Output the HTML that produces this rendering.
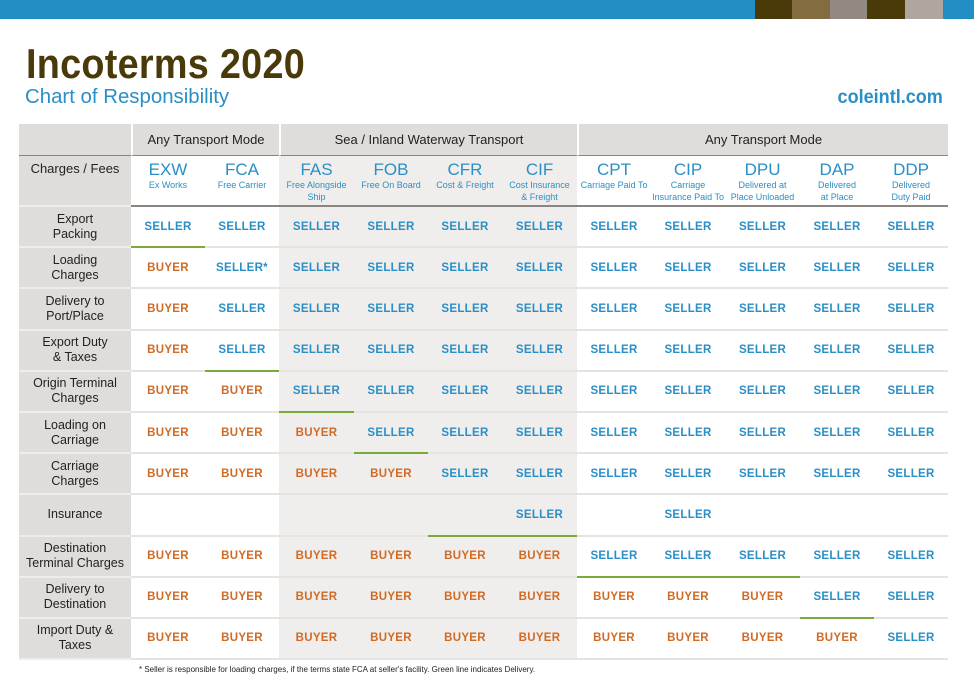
<!DOCTYPE html>
<html><head><meta charset="utf-8"><style>
*{margin:0;padding:0;box-sizing:border-box}
body{width:974px;height:676px;background:#fff;position:relative;overflow:hidden;font-family:"Liberation Sans",sans-serif}
.bar{position:absolute;left:0;top:0;width:974px;height:19px;background:#228dc2}
.sq{position:absolute;top:0;height:19px}
h1{position:absolute;left:26px;top:40px;font-size:42px;color:#4a3a0a;font-weight:bold;transform:scaleX(0.9);transform-origin:left;white-space:nowrap;letter-spacing:0.3px}
.sub{position:absolute;left:25px;top:86px;font-size:20px;color:#2a8fc7;transform:scaleX(1.02);transform-origin:left;white-space:nowrap}
.url{position:absolute;right:31px;top:87px;font-size:19px;color:#2a8fc7;font-weight:bold;transform:scaleX(0.95);transform-origin:right}
table{position:absolute;left:19px;top:124px;border-collapse:separate;border-spacing:0;table-layout:fixed;width:929px}
td{text-align:center;vertical-align:middle;padding:0;border-bottom:2px solid #e6e3e0;overflow:hidden}
tr.g td{background:#e0dcd9;height:32px;font-size:13px;color:#222;border-bottom:1px solid #8a8580}
tr.g td+td{border-left:2px solid #fff}
tr.c td{height:51px;vertical-align:top;padding-top:5px;border-bottom:2px solid #8a8580}
.code{font-size:17px;color:#2a8fc7;line-height:18px}
.n{font-size:9px;color:#2a8fc7;line-height:12px}
.s{background:#f0eeec}
tr.d td{height:41.2px;font-size:11.5px;font-weight:bold;letter-spacing:0.3px}
tr td.l,tr.d td.l{background:#e0dcd9;font-size:12.5px;color:#222;line-height:15px;border-bottom:2px solid #efedeb;font-weight:normal;letter-spacing:0}
tr.c td.l{vertical-align:top;padding-top:5px;font-size:13px}
.S{color:#2a8fc7}.B{color:#d06a24}
tr.d td.gr{border-bottom:2px solid #7aab3a}
.foot{position:absolute;left:139px;top:665px;font-size:8px;color:#222}
</style></head><body>
<div class="bar"></div>
<div class="sq" style="left:755px;width:37px;background:#4a3a0a"></div>
<div class="sq" style="left:792px;width:38px;background:#836d40"></div>
<div class="sq" style="left:830px;width:37px;background:#928a82"></div>
<div class="sq" style="left:867px;width:38px;background:#4a3a0a"></div>
<div class="sq" style="left:905px;width:38px;background:#b0a6a0"></div>
<h1>Incoterms 2020</h1>
<div class="sub">Chart of Responsibility</div>
<div class="url">coleintl.com</div>
<table>
<colgroup><col style="width:112px"><col style="width:74px"><col style="width:74px"><col style="width:75px"><col style="width:74px"><col style="width:74px"><col style="width:75px"><col style="width:74px"><col style="width:74px"><col style="width:75px"><col style="width:74px"><col style="width:74px"></colgroup>
<tr class="g"><td></td><td colspan="2">Any Transport Mode</td><td colspan="4">Sea / Inland Waterway Transport</td><td colspan="5">Any Transport Mode</td></tr>
<tr class="c"><td class="l">Charges / Fees</td>
<td><div class="code">EXW</div><div class="n">Ex Works</div></td>
<td><div class="code">FCA</div><div class="n">Free Carrier</div></td>
<td class="s"><div class="code">FAS</div><div class="n">Free Alongside<br>Ship</div></td>
<td class="s"><div class="code">FOB</div><div class="n">Free On Board</div></td>
<td class="s"><div class="code">CFR</div><div class="n">Cost &amp; Freight</div></td>
<td class="s"><div class="code">CIF</div><div class="n">Cost Insurance<br>&amp; Freight</div></td>
<td><div class="code">CPT</div><div class="n">Carriage Paid To</div></td>
<td><div class="code">CIP</div><div class="n">Carriage<br>Insurance Paid To</div></td>
<td><div class="code">DPU</div><div class="n">Delivered at<br>Place Unloaded</div></td>
<td><div class="code">DAP</div><div class="n">Delivered<br>at Place</div></td>
<td><div class="code">DDP</div><div class="n">Delivered<br>Duty Paid</div></td></tr>
<tr class="d"><td class="l">Export<br>Packing</td><td class="S gr">SELLER</td><td class="S">SELLER</td><td class="S s">SELLER</td><td class="S s">SELLER</td><td class="S s">SELLER</td><td class="S s">SELLER</td><td class="S">SELLER</td><td class="S">SELLER</td><td class="S">SELLER</td><td class="S">SELLER</td><td class="S">SELLER</td></tr>
<tr class="d"><td class="l">Loading<br>Charges</td><td class="B">BUYER</td><td class="S">SELLER*</td><td class="S s">SELLER</td><td class="S s">SELLER</td><td class="S s">SELLER</td><td class="S s">SELLER</td><td class="S">SELLER</td><td class="S">SELLER</td><td class="S">SELLER</td><td class="S">SELLER</td><td class="S">SELLER</td></tr>
<tr class="d"><td class="l">Delivery to<br>Port/Place</td><td class="B">BUYER</td><td class="S">SELLER</td><td class="S s">SELLER</td><td class="S s">SELLER</td><td class="S s">SELLER</td><td class="S s">SELLER</td><td class="S">SELLER</td><td class="S">SELLER</td><td class="S">SELLER</td><td class="S">SELLER</td><td class="S">SELLER</td></tr>
<tr class="d"><td class="l">Export Duty<br>&amp; Taxes</td><td class="B">BUYER</td><td class="S gr">SELLER</td><td class="S s">SELLER</td><td class="S s">SELLER</td><td class="S s">SELLER</td><td class="S s">SELLER</td><td class="S">SELLER</td><td class="S">SELLER</td><td class="S">SELLER</td><td class="S">SELLER</td><td class="S">SELLER</td></tr>
<tr class="d"><td class="l">Origin Terminal<br>Charges</td><td class="B">BUYER</td><td class="B">BUYER</td><td class="S s gr">SELLER</td><td class="S s">SELLER</td><td class="S s">SELLER</td><td class="S s">SELLER</td><td class="S">SELLER</td><td class="S">SELLER</td><td class="S">SELLER</td><td class="S">SELLER</td><td class="S">SELLER</td></tr>
<tr class="d"><td class="l">Loading on<br>Carriage</td><td class="B">BUYER</td><td class="B">BUYER</td><td class="B s">BUYER</td><td class="S s gr">SELLER</td><td class="S s">SELLER</td><td class="S s">SELLER</td><td class="S">SELLER</td><td class="S">SELLER</td><td class="S">SELLER</td><td class="S">SELLER</td><td class="S">SELLER</td></tr>
<tr class="d"><td class="l">Carriage<br>Charges</td><td class="B">BUYER</td><td class="B">BUYER</td><td class="B s">BUYER</td><td class="B s">BUYER</td><td class="S s">SELLER</td><td class="S s">SELLER</td><td class="S">SELLER</td><td class="S">SELLER</td><td class="S">SELLER</td><td class="S">SELLER</td><td class="S">SELLER</td></tr>
<tr class="d"><td class="l">Insurance</td><td></td><td></td><td class="s"></td><td class="s"></td><td class="s gr"></td><td class="S s gr">SELLER</td><td></td><td class="S">SELLER</td><td></td><td></td><td></td></tr>
<tr class="d"><td class="l">Destination<br>Terminal Charges</td><td class="B">BUYER</td><td class="B">BUYER</td><td class="B s">BUYER</td><td class="B s">BUYER</td><td class="B s">BUYER</td><td class="B s">BUYER</td><td class="S gr">SELLER</td><td class="S gr">SELLER</td><td class="S gr">SELLER</td><td class="S">SELLER</td><td class="S">SELLER</td></tr>
<tr class="d"><td class="l">Delivery to<br>Destination</td><td class="B">BUYER</td><td class="B">BUYER</td><td class="B s">BUYER</td><td class="B s">BUYER</td><td class="B s">BUYER</td><td class="B s">BUYER</td><td class="B">BUYER</td><td class="B">BUYER</td><td class="B">BUYER</td><td class="S gr">SELLER</td><td class="S">SELLER</td></tr>
<tr class="d"><td class="l">Import Duty &amp;<br>Taxes</td><td class="B">BUYER</td><td class="B">BUYER</td><td class="B s">BUYER</td><td class="B s">BUYER</td><td class="B s">BUYER</td><td class="B s">BUYER</td><td class="B">BUYER</td><td class="B">BUYER</td><td class="B">BUYER</td><td class="B">BUYER</td><td class="S">SELLER</td></tr>
</table>
<div class="foot">* Seller is responsible for loading charges, if the terms state FCA at seller's facility. Green line indicates Delivery.</div>
</body></html>
